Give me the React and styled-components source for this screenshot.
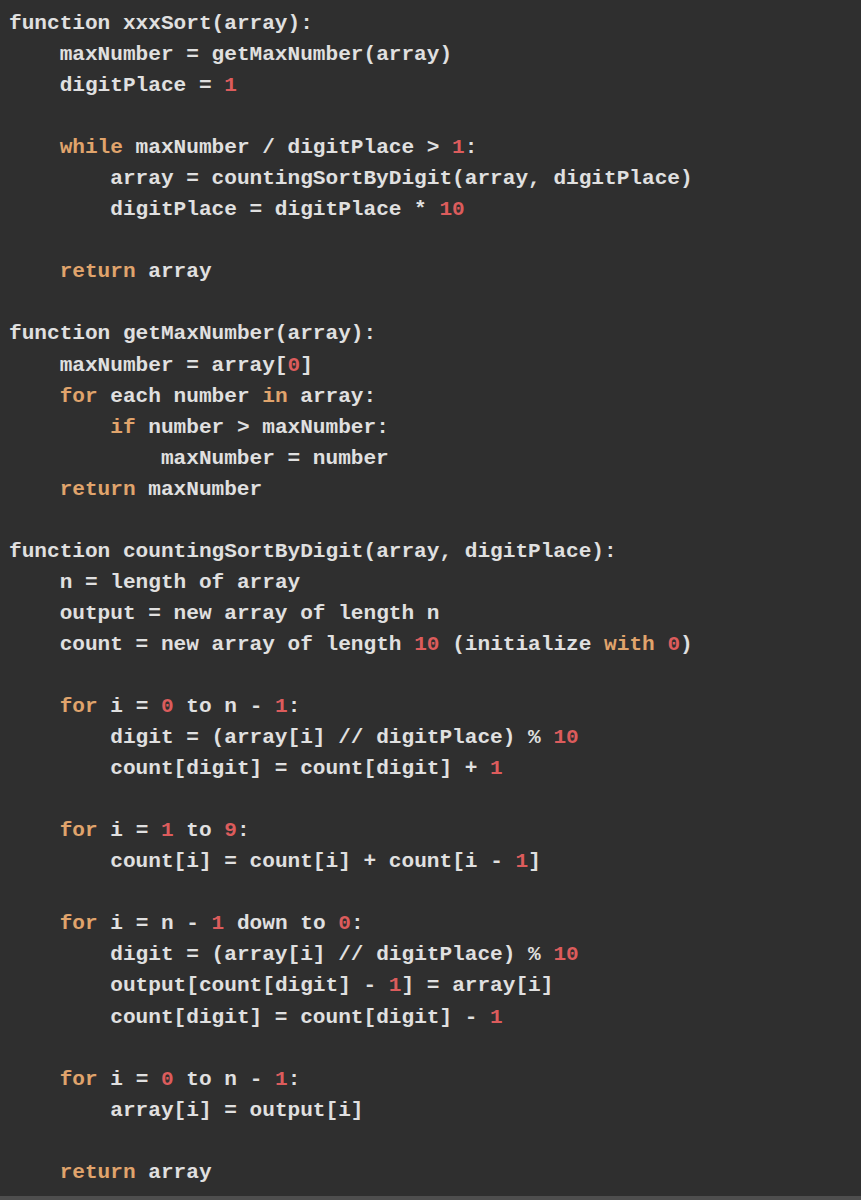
import React from 'react'
import styled, { createGlobalStyle } from 'styled-components'

const source = `function xxxSort(array):
    maxNumber = getMaxNumber(array)
    digitPlace = 1

    while maxNumber / digitPlace > 1:
        array = countingSortByDigit(array, digitPlace)
        digitPlace = digitPlace * 10

    return array

function getMaxNumber(array):
    maxNumber = array[0]
    for each number in array:
        if number > maxNumber:
            maxNumber = number
    return maxNumber

function countingSortByDigit(array, digitPlace):
    n = length of array
    output = new array of length n
    count = new array of length 10 (initialize with 0)

    for i = 0 to n - 1:
        digit = (array[i] // digitPlace) % 10
        count[digit] = count[digit] + 1

    for i = 1 to 9:
        count[i] = count[i] + count[i - 1]

    for i = n - 1 down to 0:
        digit = (array[i] // digitPlace) % 10
        output[count[digit] - 1] = array[i]
        count[digit] = count[digit] - 1

    for i = 0 to n - 1:
        array[i] = output[i]

    return array`

const KEYWORDS = ['while', 'return', 'for', 'in', 'if', 'with']

// split a line into plain / keyword / number pieces
const tokenize = (line) =>
  line.split(/(\b\w+\b)/).filter(Boolean).map((text) => {
    if (KEYWORDS.includes(text)) return { text, kind: 'kw' }
    if (/^\d+$/.test(text)) return { text, kind: 'num' }
    return { text, kind: 'plain' }
  })

const COLORS = {
  plain: '#e0e0e0',
  kw: '#e0a46c',
  num: '#dc5c5c'
}

const App = () => (
  <>
    <GlobalStyle />
    <CodeBlock>
      {source.split('\n').map((line, i) => (
        <Line key={i}>
          {tokenize(line).map((tok, j) => (
            <Token key={j} $kind={tok.kind}>{tok.text}</Token>
          ))}
        </Line>
      ))}
    </CodeBlock>
  </>
)

const GlobalStyle = createGlobalStyle`
  html, body {
    margin: 0;
    padding: 0;
    background: #2f2f2f;
  }
`

const CodeBlock = styled.pre`
  box-sizing: border-box;
  margin: 0;
  height: 1200px;
  padding: 8px 0 0 9px;
  background: #2f2f2f;
  border-bottom: 4px solid #4e4e4e;
  font-family: "Liberation Mono", "DejaVu Sans Mono", monospace;
  font-size: 21.1px;
  font-weight: 700;
  line-height: 31.05px;
  overflow: hidden;
`

const Line = styled.div`
  min-height: 31.05px;
  white-space: pre;
`

const Token = styled.span`
  color: ${({ $kind }) => COLORS[$kind]};
`

export default App
